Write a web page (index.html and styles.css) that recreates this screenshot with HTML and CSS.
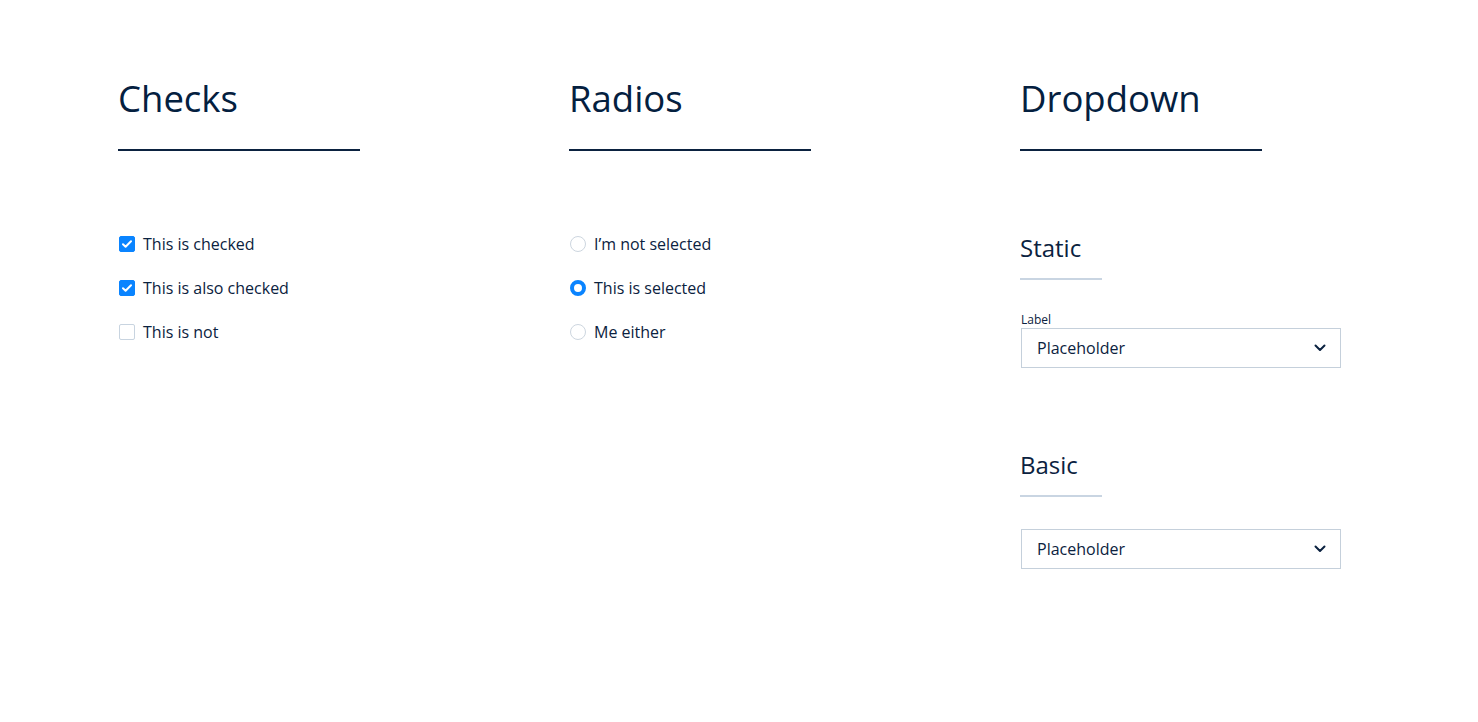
FILE: index.html
```html
<!DOCTYPE html>
<html lang="en">
<head>
  <meta charset="UTF-8">
  <title>Form controls</title>
  <link rel="stylesheet" href="styles.css">
</head>
<body>
  <div class="page">

    <section class="col">
      <h1 class="title">Checks</h1>
      <div class="rule"></div>
      <ul class="options">
        <li class="option">
          <span class="check on">
            <svg width="10" height="8" viewBox="0 0 10 8"><path d="M1 4.2l2.6 2.5L9 1.3" fill="none" stroke="#fff" stroke-width="2" stroke-linecap="round" stroke-linejoin="round"/></svg>
          </span>
          This is checked
        </li>
        <li class="option">
          <span class="check on">
            <svg width="10" height="8" viewBox="0 0 10 8"><path d="M1 4.2l2.6 2.5L9 1.3" fill="none" stroke="#fff" stroke-width="2" stroke-linecap="round" stroke-linejoin="round"/></svg>
          </span>
          This is also checked
        </li>
        <li class="option">
          <span class="check"></span>
          This is not
        </li>
      </ul>
    </section>

    <section class="col">
      <h1 class="title">Radios</h1>
      <div class="rule"></div>
      <ul class="options">
        <li class="option"><span class="radio"></span>I’m not selected</li>
        <li class="option"><span class="radio on"></span>This is selected</li>
        <li class="option"><span class="radio"></span>Me either</li>
      </ul>
    </section>

    <section class="col">
      <h1 class="title">Dropdown</h1>
      <div class="rule"></div>

      <div class="group">
        <h2 class="subtitle">Static</h2>
        <div class="subrule"></div>
        <div class="field">
          <div class="field-label">Label</div>
          <div class="select">
            <span>Placeholder</span>
            <svg width="12" height="8" viewBox="0 0 12 8"><path d="M1.5 1.5L6 6l4.5-4.5" fill="none" stroke="#0b2240" stroke-width="2" stroke-linecap="round" stroke-linejoin="round"/></svg>
          </div>
        </div>
      </div>

      <div class="group basic">
        <h2 class="subtitle">Basic</h2>
        <div class="subrule"></div>
        <div class="field">
          <div class="select">
            <span>Placeholder</span>
            <svg width="12" height="8" viewBox="0 0 12 8"><path d="M1.5 1.5L6 6l4.5-4.5" fill="none" stroke="#0b2240" stroke-width="2" stroke-linecap="round" stroke-linejoin="round"/></svg>
          </div>
        </div>
      </div>
    </section>

  </div>
</body>
</html>
```

FILE: styles.css
```css
body {
  margin: 0;
  font-family: "Open Sans", Arial, sans-serif;
  color: #0b2240;
  background: #fff;
}
.page {
  display: flex;
  padding: 74px 0 0 118px;
}
.col {
  width: 451px;
}
.title {
  margin: 0;
  font-size: 36.5px;
  font-weight: 400;
  line-height: 48px;
  color: #04203f;
}
.rule {
  width: 242px;
  height: 2px;
  margin-top: 27px;
  background: #0b2240;
}
.options {
  list-style: none;
  margin: 81px 0 0;
  padding: 0;
  display: flex;
  flex-direction: column;
  gap: 20px;
}
.option {
  display: flex;
  align-items: center;
  gap: 8px;
  font-size: 16px;
  line-height: 24px;
  padding-left: 1px;
}
.check {
  width: 16px;
  height: 16px;
  box-sizing: border-box;
  border: 1px solid #c8d4e0;
  border-radius: 2px;
  display: flex;
  align-items: center;
  justify-content: center;
}
.check.on {
  background: #0a84ff;
  border-color: #0a84ff;
}
.radio {
  width: 16px;
  height: 16px;
  box-sizing: border-box;
  border: 1px solid #cdd6df;
  border-radius: 50%;
}
.radio.on {
  border: 4.5px solid #0a84ff;
}
.group {
  margin-top: 81px;
}
.subtitle {
  margin: 0;
  font-size: 24px;
  font-weight: 400;
  line-height: 32px;
}
.subrule {
  width: 82px;
  height: 2px;
  margin-top: 14px;
  background: #c9d5e2;
}
.field {
  margin-top: 31px;
  padding-left: 1px;
}
.basic .field {
  margin-top: 32px;
}
.field-label {
  font-size: 12px;
  line-height: 17px;
}
.select {
  width: 320px;
  height: 40px;
  box-sizing: border-box;
  border: 1px solid #c5d0db;
  padding: 0 14px 0 15px;
  display: flex;
  align-items: center;
  justify-content: space-between;
  font-size: 16px;
}
```
